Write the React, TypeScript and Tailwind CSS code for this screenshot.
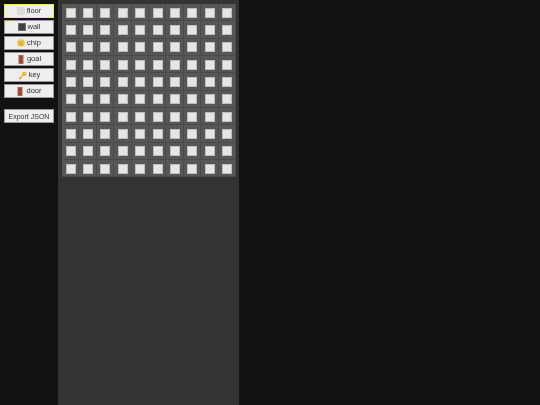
import React from 'react';

const Floor = () => (
  <svg width="8" height="8" viewBox="0 0 8 8"><rect width="8" height="8" fill="#dcdcdc" /></svg>
);
const Wall = () => (
  <svg width="8" height="8" viewBox="0 0 8 8"><rect width="8" height="8" fill="#6e6e6e" /><rect x="1" y="1" width="6" height="6" fill="#404040" /></svg>
);
const Chip = () => (
  <svg width="8" height="8" viewBox="0 0 8 8">
    <circle cx="4" cy="4" r="3.8" fill="#f2c14e" />
    <circle cx="2.7" cy="3.3" r="0.55" fill="#8a6a24" />
    <circle cx="5.3" cy="3.3" r="0.55" fill="#8a6a24" />
    <path d="M2.6 5.4 H5.4" stroke="#a37c28" strokeWidth="0.6" />
  </svg>
);
const Door = () => (
  <svg width="8" height="9" viewBox="0 0 8 9">
    <rect x="1.5" y="0" width="5" height="9" fill="#b0664a" />
    <rect x="2.5" y="1" width="3" height="7" fill="#8c4630" />
    <circle cx="4.9" cy="4.8" r="0.45" fill="#e8c47a" />
  </svg>
);
const Key = () => (
  <svg width="9" height="9" viewBox="0 0 9 9">
    <circle cx="6.3" cy="2.7" r="2.2" fill="#eeb93a" />
    <path d="M5 4 L1 8 M2.1 6.9 L3.2 8" stroke="#e3a92a" strokeWidth="1.3" />
  </svg>
);

const tools = [
  { label: 'floor', icon: <Floor />, active: true },
  { label: 'wall', icon: <Wall />, active: false },
  { label: 'chip', icon: <Chip />, active: false },
  { label: 'goal', icon: <Door />, active: false },
  { label: 'key', icon: <Key />, active: false },
  { label: 'door', icon: <Door />, active: false },
];

export default function App() {
  const cells = Array.from({ length: 100 });
  return (
    <div className="flex h-[405px] w-[540px] overflow-hidden bg-[#111111] font-['Liberation_Sans',sans-serif]">
      <div className="flex w-[58px] shrink-0 flex-col gap-[2px] p-[4px] [will-change:transform]">
        {tools.map((t) => (
          <button
            key={t.label}
            className={`flex h-[14px] w-[50px] items-center justify-center gap-[2px] border bg-[#eeeeee] text-[7.5px] leading-none text-[#333333] ${t.active ? 'border-[#efec50]' : 'border-[#999999]'}`}
          >
            {t.icon}
            <span>{t.label}</span>
          </button>
        ))}
        <button className="mt-[9px] flex h-[14px] w-[50px] items-center justify-center border border-[#999999] bg-[#eeeeee] text-[7px] leading-none text-[#333333]">
          Export JSON
        </button>
      </div>
      <div className="h-full w-[181px] shrink-0 bg-[#333333] pl-[4px] pt-[4px]">
        <div className="grid w-[174px] grid-cols-10 bg-[#555555]">
          {cells.map((_, i) => (
            <div key={i} className="flex h-[17.33px] items-center justify-center bg-[#575757] shadow-[inset_-1px_-1px_0_#4a4a4a]">
              <div className="h-[10px] w-[10px] border border-[#bdbdbd] bg-[#e6e6e6]" />
            </div>
          ))}
        </div>
      </div>
    </div>
  );
}
